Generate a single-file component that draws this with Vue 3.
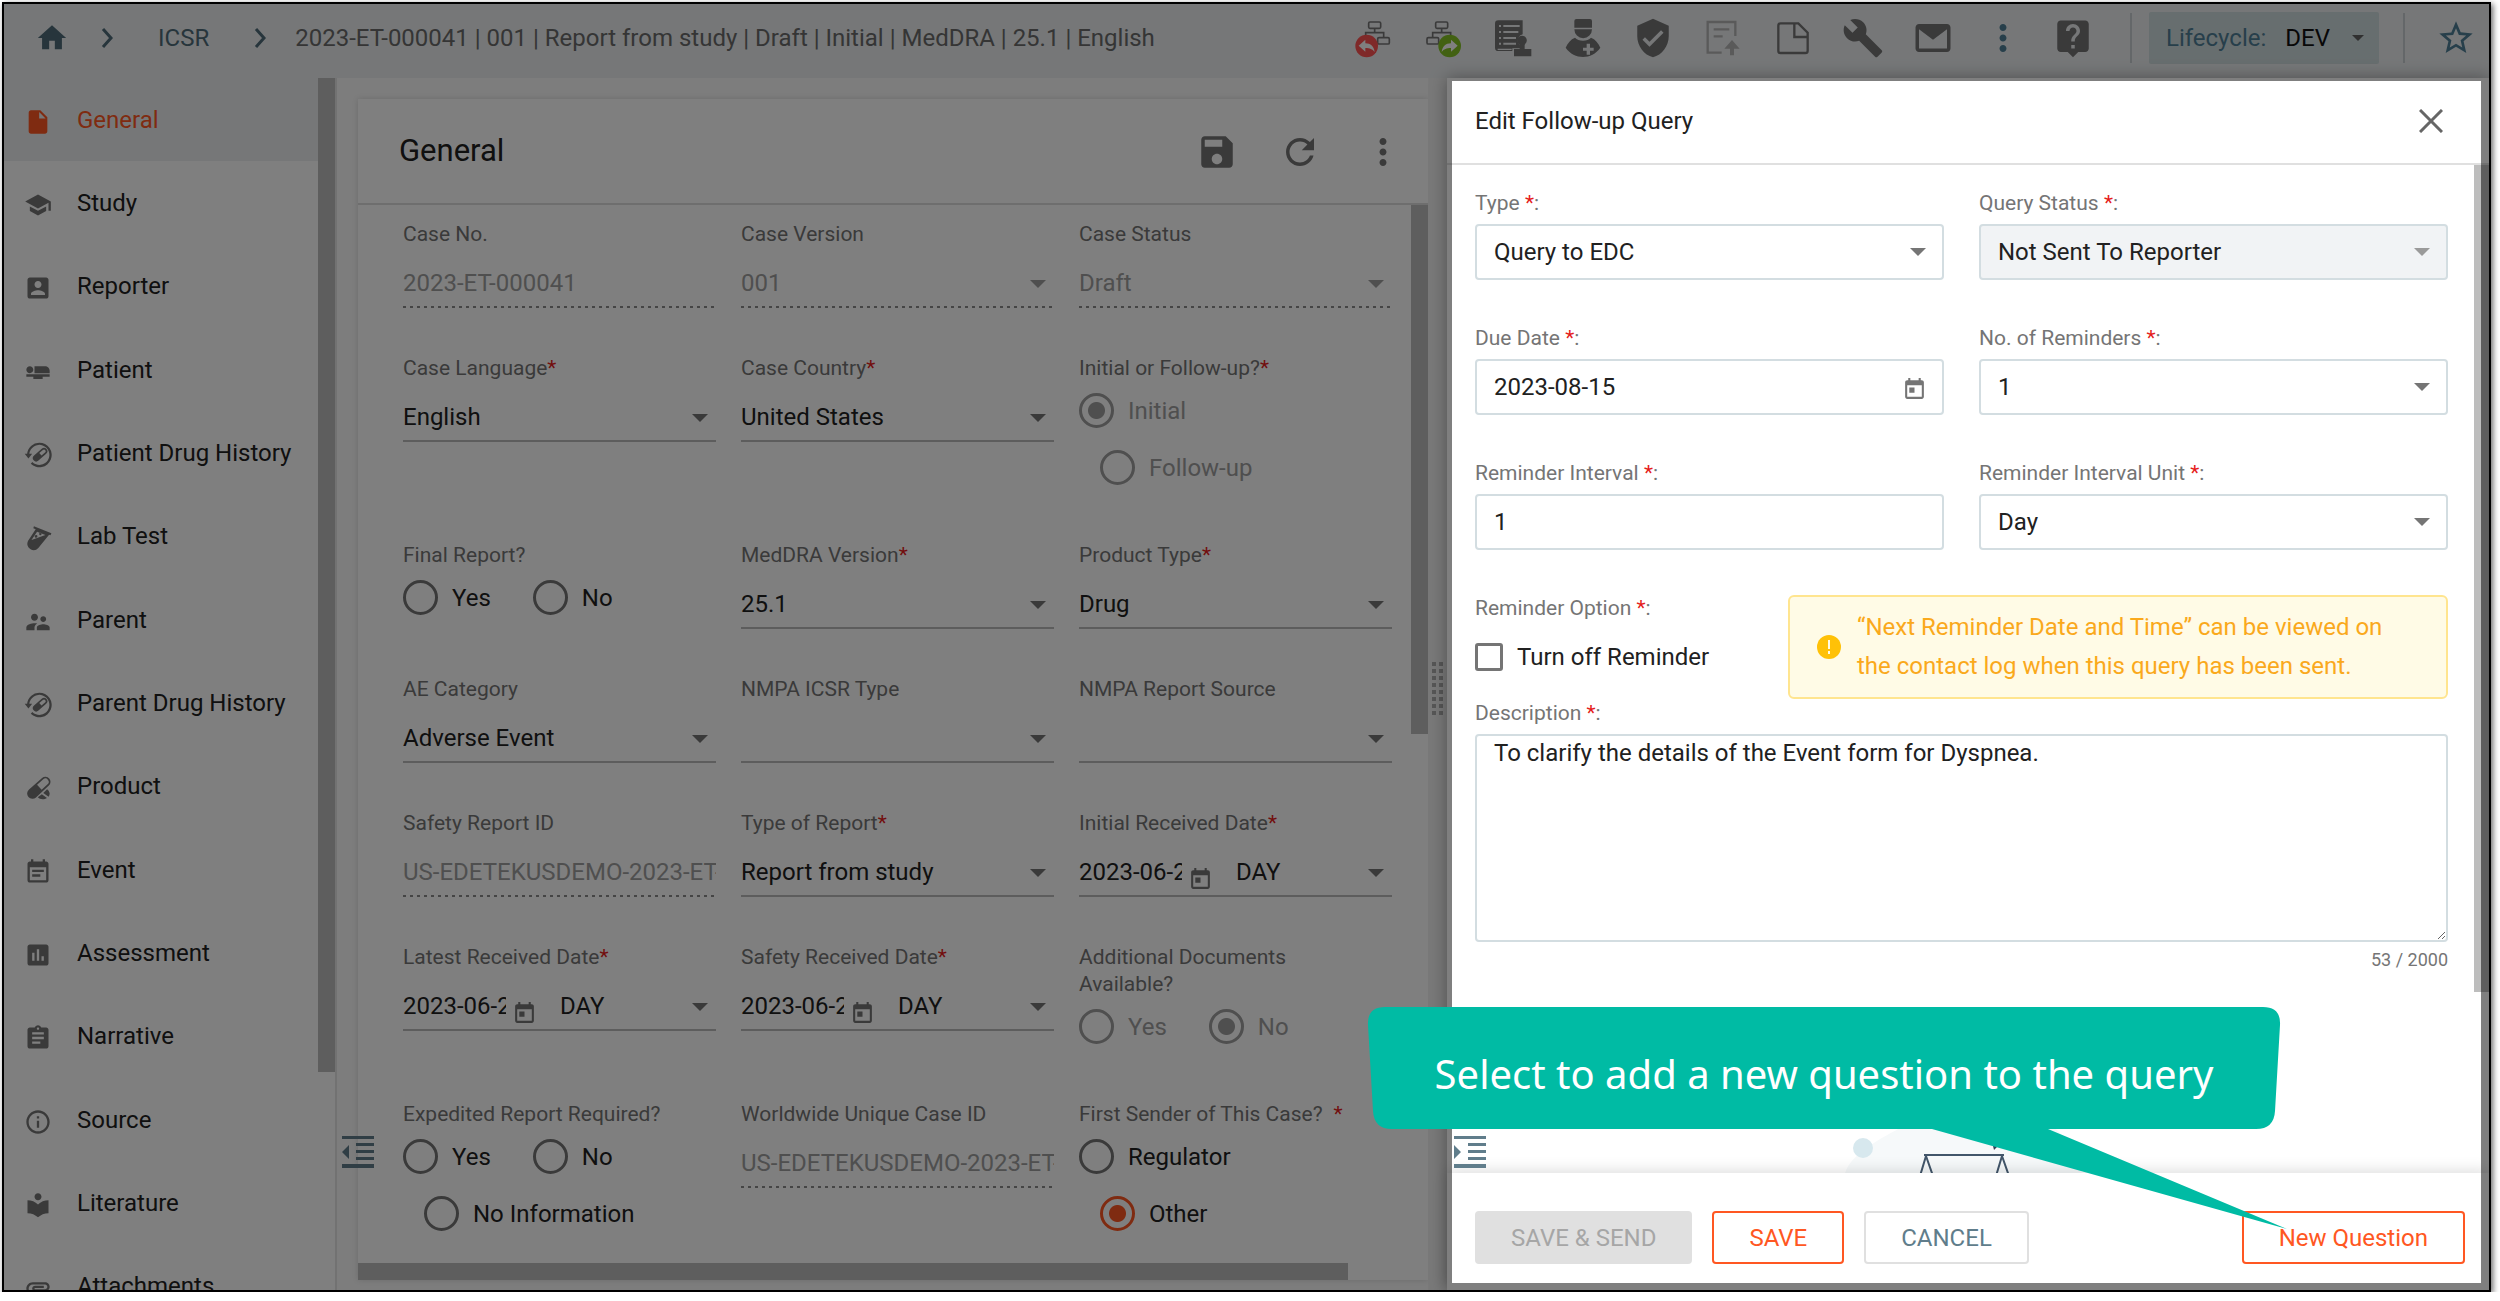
<script setup>
import { ref } from 'vue'

const menu = [
  { label: 'General', icon: 'file', active: true },
  { label: 'Study', icon: 'school' },
  { label: 'Reporter', icon: 'reporter' },
  { label: 'Patient', icon: 'patient' },
  { label: 'Patient Drug History', icon: 'history' },
  { label: 'Lab Test', icon: 'lab' },
  { label: 'Parent', icon: 'parent' },
  { label: 'Parent Drug History', icon: 'history' },
  { label: 'Product', icon: 'pill' },
  { label: 'Event', icon: 'event' },
  { label: 'Assessment', icon: 'assessment' },
  { label: 'Narrative', icon: 'narrative' },
  { label: 'Source', icon: 'info' },
  { label: 'Literature', icon: 'library' },
  { label: 'Attachments', icon: 'attachment' },
]

const paths = {
  file: 'M6 2c-1.1 0-1.99.9-1.99 2L4 20c0 1.1.89 2 1.99 2H18c1.1 0 2-.9 2-2V8l-6-6H6zm7 7V3.5L18.5 9H13z',
  school: 'M5 13.18v4L12 21l7-3.82v-4L12 17l-7-3.82zM12 3L1 9l11 6 9-4.91V17h2V9L12 3z',
  reporter: 'M3 5v14c0 1.1.89 2 2 2h14c1.1 0 2-.9 2-2V5c0-1.1-.9-2-2-2H5c-1.11 0-2 .9-2 2zm12 4c0 1.66-1.34 3-3 3s-3-1.34-3-3 1.34-3 3-3 3 1.34 3 3zm-9 8c0-2 4-3.1 6-3.1s6 1.1 6 3.1v1H6v-1z',
  patient: 'M22 11v2H9V7h9c2.21 0 4 1.79 4 4zM2 14v2h6v2h8v-2h6v-2H2zm5.14-1.9c1.16-1.19 1.14-3.08-.04-4.24-1.19-1.16-3.08-1.14-4.24.04-1.16 1.19-1.14 3.08.04 4.24 1.19 1.16 3.08 1.14 4.24-.04z',
  history: 'M13 1.5A10.5 10.5 0 0 0 2.7 11H.6l3.2 4L7 11H4.6a8.6 8.6 0 1 1 2.5 7l-1.3 1.4A10.5 10.5 0 1 0 13 1.5zM15.2 6.6l-6.6 5.8a2.9 2.9 0 0 0 3.8 4.4L19 11a2.9 2.9 0 0 0-3.8-4.4zm1 1.1a1.4 1.4 0 0 1 1.8 2.2L15 12.5l-1.9-2.2z',
  lab: 'M8.5 2l15 6-.8 1.6-1.2-.4L12.3 20.5A5.4 5.4 0 0 1 3.4 14.6L10 4.6l-2-1zM11.2 6.6L6.4 13.8l12-4.3zM10.3 9.4a1.2 1.2 0 1 1 .1 2.4 1.2 1.2 0 0 1-.1-2.4zM14 7.6a1 1 0 1 1 0 2 1 1 0 0 1 0-2z',
  parent: 'M16.5 12c1.38 0 2.49-1.12 2.49-2.5S17.88 7 16.5 7C15.12 7 14 8.12 14 9.5s1.12 2.5 2.5 2.5zM9 11c1.66 0 2.99-1.34 2.99-3S10.66 5 9 5C7.34 5 6 6.34 6 8s1.34 3 3 3zm7.5 3c-1.83 0-5.5.92-5.5 2.75V19h11v-2.25c0-1.83-3.67-2.75-5.5-2.75zM9 13c-2.33 0-7 1.17-7 3.5V19h7v-2.25c0-.85.33-2.34 2.37-3.47C10.5 13.1 9.66 13 9 13z',
  pill: 'M15.5 3.5L4.3 13.2a4.6 4.6 0 0 0 6 7L21.3 9.9a4.2 4.2 0 0 0-5.8-6.4zm1 1.1a2.7 2.7 0 0 1 3.7 4.2l-5.1 4.8-3.9-4.4zM19.8 13l-3.3 3.2 4.6 3.3a4.5 4.5 0 0 0-1.3-6.5zM15.3 17.3l-3.5 2.7c1.8 2 5.6 2.2 7.9.5z',
  event: 'M17 10H7v2h10v-2zm2-7h-1V1h-2v2H8V1H6v2H5c-1.11 0-1.99.9-1.99 2L3 19c0 1.1.89 2 2 2h14c1.1 0 2-.9 2-2V5c0-1.1-.9-2-2-2zm0 16H5V8h14v11zm-5-5H7v2h7v-2z',
  assessment: 'M19 3H5c-1.1 0-2 .9-2 2v14c0 1.1.9 2 2 2h14c1.1 0 2-.9 2-2V5c0-1.1-.9-2-2-2zM9 17H7v-7h2v7zm4 0h-2V7h2v10zm4 0h-2v-4h2v4z',
  narrative: 'M19 3h-4.18C14.4 1.84 13.3 1 12 1c-1.3 0-2.4.84-2.82 2H5c-1.1 0-2 .9-2 2v14c0 1.1.9 2 2 2h14c1.1 0 2-.9 2-2V5c0-1.1-.9-2-2-2zm-7 0c.55 0 1 .45 1 1s-.45 1-1 1-1-.45-1-1 .45-1 1-1zm2 14H7v-2h7v2zm3-4H7v-2h10v2zm0-4H7V7h10v2z',
  info: 'M11 17h2v-6h-2v6zm1-15C6.48 2 2 6.48 2 12s4.48 10 10 10 10-4.48 10-10S17.52 2 12 2zm0 18c-4.41 0-8-3.59-8-8s3.59-8 8-8 8 3.59 8 8-3.59 8-8 8zM11 9h2V7h-2v2z',
  library: 'M12 11.55C9.64 9.35 6.48 8 3 8v11c3.48 0 6.64 1.35 9 3.55 2.36-2.19 5.52-3.55 9-3.55V8c-3.48 0-6.64 1.35-9 3.55zM12 8c1.66 0 3-1.34 3-3s-1.34-3-3-3-3 1.34-3 3 1.34 3 3 3z',
  attachment: 'M2 12.5C2 9.46 4.46 7 7.5 7H18c2.21 0 4 1.79 4 4s-1.79 4-4 4H9.5C8.12 15 7 13.88 7 12.5S8.12 10 9.5 10H17v2H9.41c-.55 0-.55 1 0 1H18c1.1 0 2-.9 2-2s-.9-2-2-2H7.5C5.57 9 4 10.57 4 12.5S5.57 16 7.5 16H17v2H7.5C4.46 18 2 15.54 2 12.5z',
  save: 'M17 3H5c-1.11 0-2 .9-2 2v14c0 1.1.89 2 2 2h14c1.1 0 2-.9 2-2V7l-4-4zm-5 16c-1.66 0-3-1.34-3-3s1.34-3 3-3 3 1.34 3 3-1.34 3-3 3zm3-10H5V5h10v4z',
  refresh: 'M17.65 6.35C16.2 4.9 14.21 4 12 4c-4.42 0-7.99 3.58-7.99 8s3.57 8 7.99 8c3.73 0 6.84-2.55 7.73-6h-2.08c-.82 2.33-3.04 4-5.65 4-3.31 0-6-2.69-6-6s2.69-6 6-6c1.66 0 3.14.69 4.22 1.78L13 11h7V4l-2.35 2.35z',
  more: 'M12 8c1.1 0 2-.9 2-2s-.9-2-2-2-2 .9-2 2 .9 2 2 2zm0 2c-1.1 0-2 .9-2 2s.9 2 2 2 2-.9 2-2-.9-2-2-2zm0 6c-1.1 0-2 .9-2 2s.9 2 2 2 2-.9 2-2-.9-2-2-2z',
  today: 'M19 3h-1V1h-2v2H8V1H6v2H5c-1.11 0-1.99.9-1.99 2L3 19c0 1.1.89 2 2 2h14c1.1 0 2-.9 2-2V5c0-1.1-.9-2-2-2zm0 16H5V8h14v11zM7 10h5v5H7z',
  shield: 'M12 1L3 5v6c0 5.55 3.84 10.74 9 12 5.16-1.26 9-6.45 9-12V5l-9-4zm-2 16l-4-4 1.41-1.41L10 14.17l6.59-6.59L18 9l-8 8z',
  wrench: 'M22.7 19l-9.1-9.1c.9-2.3.4-5-1.5-6.9-2-2-5-2.4-7.4-1.3L9 6 6 9 1.6 4.7C.4 7.1.9 10.1 2.9 12.1c1.9 1.9 4.6 2.4 6.9 1.5l9.1 9.1c.4.4 1 .4 1.4 0l2.3-2.3c.5-.4.5-1.1.1-1.4z',
  mail: 'M20 4H4c-1.1 0-1.99.9-1.99 2L2 18c0 1.1.9 2 2 2h16c1.1 0 2-.9 2-2V6c0-1.1-.9-2-2-2zm0 14H4V7l8 6 8-6v11z',
  help: 'M19 2H5c-1.11 0-2 .9-2 2v14c0 1.1.89 2 2 2h4l3 3 3-3h4c1.1 0 2-.9 2-2V4c0-1.1-.9-2-2-2zm-6 16h-2v-2h2v2zm2.07-7.75l-.9.92C13.45 11.9 13 12.5 13 14h-2v-.5c0-1.1.45-2.1 1.17-2.83l1.24-1.26c.37-.36.59-.86.59-1.41 0-1.1-.9-2-2-2s-2 .9-2 2H8c0-2.21 1.79-4 4-4s4 1.79 4 4c0 .88-.36 1.68-.93 2.25z',
  star: 'M22 9.24l-7.19-.62L12 2 9.19 8.63 2 9.24l5.46 4.73L5.82 21 12 17.27 18.18 21l-1.63-7.03L22 9.24zM12 15.4l-3.76 2.27 1-4.28-3.32-2.88 4.38-.38L12 6.1l1.71 4.04 4.38.38-3.32 2.88 1 4.28L12 15.4z',
}

const tools = [
  { name: 'shield', title: 'Validate' },
  { name: 'export', title: 'Export' },
  { name: 'document', title: 'Document' },
  { name: 'wrench', title: 'Tools' },
  { name: 'mail', title: 'Correspondence' },
  { name: 'more', title: 'More', accent: true },
  { name: 'help', title: 'Help' },
]

const fields = [
  { id: 'case-no', label: 'Case No.', type: 'text', value: '2023-ET-000041', disabled: true },
  { id: 'case-version', label: 'Case Version', type: 'select', value: '001', disabled: true },
  { id: 'case-status', label: 'Case Status', type: 'select', value: 'Draft', disabled: true },
  { id: 'case-language', label: 'Case Language', required: true, type: 'select', value: 'English' },
  { id: 'case-country', label: 'Case Country', required: true, type: 'select', value: 'United States' },
  { id: 'initial', label: 'Initial or Follow-up?', required: true, type: 'radio', options: ['Initial', 'Follow-up'], value: 'Initial', disabled: true },
  { id: 'final-report', label: 'Final Report?', type: 'radio', options: ['Yes', 'No'], value: '' },
  { id: 'meddra', label: 'MedDRA Version', required: true, type: 'select', value: '25.1' },
  { id: 'product-type', label: 'Product Type', required: true, type: 'select', value: 'Drug' },
  { id: 'ae-category', label: 'AE Category', type: 'select', value: 'Adverse Event' },
  { id: 'nmpa-type', label: 'NMPA ICSR Type', type: 'select', value: '' },
  { id: 'nmpa-source', label: 'NMPA Report Source', type: 'select', value: '' },
  { id: 'safety-id', label: 'Safety Report ID', type: 'text', value: 'US-EDETEKUSDEMO-2023-ET-000041', disabled: true },
  { id: 'report-type', label: 'Type of Report', required: true, type: 'select', value: 'Report from study' },
  { id: 'initial-date', label: 'Initial Received Date', required: true, type: 'date', value: '2023-06-28' },
  { id: 'latest-date', label: 'Latest Received Date', required: true, type: 'date', value: '2023-06-28' },
  { id: 'safety-date', label: 'Safety Received Date', required: true, type: 'date', value: '2023-06-28' },
  { id: 'documents', label: 'Additional Documents Available?', type: 'radio', options: ['Yes', 'No'], value: 'No', disabled: true },
  { id: 'expedited', label: 'Expedited Report Required?', type: 'radio', options: ['Yes', 'No', 'No Information'], value: '' },
  { id: 'worldwide-id', label: 'Worldwide Unique Case ID', type: 'text', value: 'US-EDETEKUSDEMO-2023-ET-000041', disabled: true },
  { id: 'first-sender', label: 'First Sender of This Case?', required: true, spaced: true, type: 'radio', options: ['Regulator', 'Other'], value: 'Other' },
]

const queryFields = [
  { id: 'q-type', label: 'Type', type: 'select', value: 'Query to EDC' },
  { id: 'q-status', label: 'Query Status', type: 'select', value: 'Not Sent To Reporter', disabled: true },
  { id: 'q-due', label: 'Due Date', type: 'date', value: '2023-08-15' },
  { id: 'q-reminders', label: 'No. of Reminders', type: 'select', value: '1' },
  { id: 'q-interval', label: 'Reminder Interval', type: 'text', value: '1' },
  { id: 'q-unit', label: 'Reminder Interval Unit', type: 'select', value: 'Day' },
]

const description = ref('To clarify the details of the Event form for Dyspnea.')
</script>

<template>
  <div class="app">
    <header class="topbar">
      <nav class="crumbs" aria-label="Breadcrumb">
        <a href="#" class="home" aria-label="Home">
          <svg viewBox="0 0 24 24"><path d="M10 20v-6h4v6h5v-8h3L12 3 2 12h3v8z" /></svg>
        </a>
        <svg class="chevron" viewBox="0 0 14 20"><path d="M2 1l8 9-8 9" /></svg>
        <a href="#" class="crumb">ICSR</a>
        <svg class="chevron" viewBox="0 0 14 20"><path d="M2 1l8 9-8 9" /></svg>
        <span class="case-title">2023-ET-000041 | 001 | Report from study | Draft | Initial | MedDRA | 25.1 | English</span>
      </nav>
      <div class="tools">
        <button type="button" title="Previous">
          <svg viewBox="40 51 126 126">
            <g class="line">
              <rect x="90" y="66" width="36" height="19" rx="4" />
              <path d="M108 85v13M81 106v-8h54v14" />
              <rect x="117" y="113" width="35" height="19" rx="4" />
            </g>
            <circle cx="84" cy="138" r="34" fill="#ff5252" />
            <path d="M60 137l20-18v11c16 0 26 9 28 26-7-9-14-12-28-12v11z" fill="#fff" />
          </svg>
        </button>
        <button type="button" title="Next">
          <svg viewBox="257 51 126 126">
            <g class="line">
              <rect x="298" y="66" width="36" height="19" rx="4" />
              <path d="M316 85v13M289 112v-14h54v8" />
              <rect x="272" y="113" width="35" height="19" rx="4" />
            </g>
            <circle cx="340" cy="138" r="34" fill="#84c225" />
            <path d="M364 137l-20-18v11c-16 0-26 9-28 26 7-9 14-12 28-12v11z" fill="#fff" />
          </svg>
        </button>
        <button type="button" title="Sign off">
          <svg viewBox="459 53 126 126">
            <path fill-rule="evenodd" d="M478 63h73v42a18 18 0 0 0-12 27l4 6v9h-23v8h-42a10 10 0 0 1-10-10V73a10 10 0 0 1 10-10zm2 14v6h6v-6zm13 0v6h49v-6zm-13 18v6h6v-6zm13 0v6h45v-6zm-13 18v6h6v-6zm13 0v6h38v-6zm-13 17v6h6v-6zm13 0v6h38v-6zm-17 18v4h42v-4z" />
            <path d="M549 109a14 14 0 0 1 10 24l-2 4v12h20v22h-52v-22h17v-12l-3-4a14 14 0 0 1 10-24z" />
          </svg>
        </button>
        <button type="button" title="Reporter">
          <svg viewBox="670 51 126 126">
            <path d="M713 57h41q6 0 6 6v20h-53V63q0-6 6-6zM707 88h53a26.5 26.5 0 0 1-53 0z" />
            <path fill-rule="evenodd" d="M681 143c6-14 15-25 28-30 10 12 38 12 48 0 13 5 22 16 28 30-26 37-78 37-104 0zm63-12v12h-11v9h11v12h10v-12h11v-9h-11v-12z" />
          </svg>
        </button>
        <button v-for="t in tools" :key="t.name" type="button" :title="t.title" :class="{ accent: t.accent }">
          <svg v-if="t.name === 'export'" class="muted" viewBox="1089 51 126 126">
            <path class="thick" d="M1148 158h-42V66h83v42" />
            <path class="thick" d="M1124 88h47M1124 109h27" />
            <path d="M1179 120l23 26h-17v20h-12v-20h-17z" />
          </svg>
          <svg v-else-if="t.name === 'document'" viewBox="1296 51 126 126">
            <path class="thick" d="M1322 70h53l28 28v54q0 7-7 7h-74q-7 0-7-7V77q0-7 7-7z" />
            <path class="thick" d="M1363 70v41h40" />
          </svg>
          <svg v-else viewBox="0 0 24 24"><path fill-rule="evenodd" :d="paths[t.name]" /></svg>
        </button>
      </div>
      <div class="lifecycle-area">
        <div class="lifecycle">
          <label for="lifecycle">Lifecycle:</label>
          <select id="lifecycle"><option>DEV</option></select>
          <svg class="small-caret" viewBox="0 0 12 6"><path d="M0 0h12l-6 6z" /></svg>
        </div>
      </div>
      <button type="button" class="star" title="Favourite"><svg viewBox="0 0 24 24"><path :d="paths.star" /></svg></button>
    </header>

    <div class="body">
      <aside class="sidebar">
        <ul class="menu">
          <li v-for="m in menu" :key="m.label">
            <a href="#" :class="{ active: m.active }">
              <svg viewBox="0 0 24 24"><path fill-rule="evenodd" :d="paths[m.icon]" /></svg>
              <span>{{ m.label }}</span>
            </a>
          </li>
        </ul>
        <div class="side-bar"></div>
      </aside>

      <main class="main">
        <section class="card">
          <div class="card-head">
            <h1>General</h1>
            <div class="card-actions">
              <button v-for="n in ['save', 'refresh', 'more']" :key="n" type="button" :title="n">
                <svg viewBox="0 0 24 24"><path :d="paths[n]" /></svg>
              </button>
            </div>
          </div>
          <div class="card-body">
            <form class="case-form">
              <div v-for="f in fields" :key="f.id" class="field" :class="{ disabled: f.disabled }">
                <component :is="f.type === 'radio' ? 'div' : 'label'" class="label" :for="f.type === 'radio' ? null : f.id">{{ f.label }}<b v-if="f.required" :class="{ spaced: f.spaced }">*</b></component>
                <div v-if="f.type === 'radio'" class="radios" role="radiogroup" :aria-label="f.label">
                  <label v-for="o in f.options" :key="o">
                    <input type="radio" :name="f.id" :value="o" :checked="o === f.value" :disabled="f.disabled" />
                    <span>{{ o }}</span>
                  </label>
                </div>
                <div v-else-if="f.type === 'date'" class="control">
                  <input :id="f.id" class="date" type="text" :value="f.value" />
                  <svg class="today" viewBox="0 0 24 24"><path :d="paths.today" /></svg>
                  <select aria-label="Precision"><option>DAY</option></select>
                  <svg class="caret" viewBox="0 0 16 8"><path d="M0 0h16l-8 8z" /></svg>
                </div>
                <div v-else class="control">
                  <input v-if="f.type === 'text'" :id="f.id" type="text" :value="f.value" :disabled="f.disabled" />
                  <template v-else>
                    <select :id="f.id" :disabled="f.disabled"><option>{{ f.value }}</option></select>
                    <svg class="caret" viewBox="0 0 16 8"><path d="M0 0h16l-8 8z" /></svg>
                  </template>
                </div>
              </div>
            </form>
            <div class="v-track"><div class="v-thumb"></div></div>
            <div class="h-track"><div class="h-thumb"></div></div>
          </div>
        </section>
        <div class="splitter"><div class="grip"></div></div>
        <button type="button" class="toggle" title="Collapse menu">
          <svg viewBox="0 0 32 32"><path d="M0 0h32v3H0zM14 7h18v3H14zM14 14h18v3H14zM14 21h18v3H14zM0 28h32v4H0zM7 9v14l-7-7z" /></svg>
        </button>
      </main>

      <section class="drawer" aria-label="Edit Follow-up Query">
        <div class="drawer-head">
          <h2>Edit Follow-up Query</h2>
          <button type="button" class="close" title="Close"><svg viewBox="0 0 24 24"><path d="M1 1l22 22M23 1L1 23" /></svg></button>
        </div>
        <div class="drawer-body">
          <div class="query-grid">
            <div v-for="q in queryFields" :key="q.id" class="q-field">
              <label :for="q.id" class="q-label">{{ q.label }} <b>*</b>:</label>
              <div class="q-control" :class="{ off: q.disabled }">
                <template v-if="q.type === 'select'">
                  <select :id="q.id" :disabled="q.disabled"><option>{{ q.value }}</option></select>
                  <svg class="caret" viewBox="0 0 16 8"><path d="M0 0h16l-8 8z" /></svg>
                </template>
                <template v-else>
                  <input :id="q.id" type="text" :value="q.value" />
                  <svg v-if="q.type === 'date'" class="today" viewBox="0 0 24 24"><path :d="paths.today" /></svg>
                </template>
              </div>
            </div>
          </div>
          <div class="option-row">
            <div class="option">
              <div class="q-label">Reminder Option <b>*</b>:</div>
              <label class="check"><input type="checkbox" /><span>Turn off Reminder</span></label>
            </div>
            <div class="notice">
              <svg viewBox="0 0 24 24"><circle cx="12" cy="12" r="12" fill="#ffc107" /><path d="M11 5h2v9h-2zM11 16h2v3h-2z" fill="#fffbe6" /></svg>
              <p>“Next Reminder Date and Time” can be viewed on the contact log when this query has been sent.</p>
            </div>
          </div>
          <label for="q-desc" class="q-label">Description <b>*</b>:</label>
          <textarea id="q-desc" v-model="description"></textarea>
          <div class="counter">{{ description.length }} / 2000</div>
          <svg class="art" viewBox="0 0 240 160">
            <path d="M2 100C2 80 28 64 58 48C100 20 180 20 215 50C236 70 240 84 240 100V160H2z" fill="#f6f9fa" />
            <circle cx="21" cy="68" r="10" fill="#d7e8ee" />
            <path d="M82 75h80M84 76l-12 40M84 76l14 40M160 76l-12 40M160 76l14 40" fill="none" stroke="#42566a" stroke-width="2" />
            <path d="M150 62l8 2-6 6z" fill="#2f4256" />
          </svg>
          <div class="drawer-thumb"></div>
        </div>
        <div class="drawer-foot">
          <button type="button" class="btn" disabled>SAVE &amp; SEND</button>
          <button type="button" class="btn primary">SAVE</button>
          <button type="button" class="btn plain">CANCEL</button>
          <button type="button" class="btn primary last">New Question</button>
        </div>
        <button type="button" class="toggle" title="Expand panel">
          <svg viewBox="0 0 32 32"><path d="M0 0h32v3H0zM14 7h18v3H14zM14 14h18v3H14zM14 21h18v3H14zM0 28h32v4H0zM0 9v14l7-7z" /></svg>
        </button>
        <div class="spotlight"></div>
        <div class="callout">
          <svg viewBox="0 0 922 224"><path d="M18 1H896Q914 1 913 19L908 105Q907 123 889 123H681L920 223L565 123H25Q7 123 6 105L1 19Q0 1 18 1z" /></svg>
          <p>Select to add a new question to the query</p>
        </div>
      </section>
    </div>
  </div>
</template>

<style>
body {
  background: #fff;
}
</style>

<style scoped>
* {
  box-sizing: border-box;
}

.app {
  display: flex;
  flex-direction: column;
  position: relative;
  height: calc(100vh - 11px);
  margin: 2px 9px 0 2px;
  border: 2px solid #000;
  box-shadow: 2px 2px 6px rgba(0, 0, 0, 0.6);
  overflow: hidden;
  background: #fff;
  color: #212121;
  font: 24px/28px Roboto, "Liberation Sans", sans-serif;
}

button,
input,
select,
textarea {
  margin: 0;
  padding: 0;
  border: 0;
  outline: 0;
  background: none;
  color: inherit;
  font: inherit;
}

select,
input {
  appearance: none;
  min-width: 0;
  border-radius: 0;
  opacity: 1;
}

h1,
h2,
p,
ul {
  margin: 0;
  padding: 0;
  font-weight: 400;
  list-style: none;
}

a {
  color: inherit;
  text-decoration: none;
}

svg {
  display: block;
  flex: none;
  fill: currentColor;
}

/* top bar */
.topbar {
  display: flex;
  align-items: center;
  flex: 0 0 74px;
  background: #eceff1;
  padding-bottom: 7px;
}

.crumbs {
  display: flex;
  align-items: center;
  flex: 1;
  min-width: 0;
  padding-left: 31px;
  color: #4f6b78;
  white-space: nowrap;
}

.home svg {
  width: 34px;
  height: 34px;
}

.chevron {
  width: 14px;
  height: 20px;
  margin-left: 32px;
  fill: none;
  stroke: currentColor;
  stroke-width: 3;
}

.crumb {
  margin-left: 43px;
}

.crumb + .chevron {
  margin-left: 45px;
}

.case-title {
  margin-left: 27px;
  color: #6b6b6b;
}

.tools {
  display: flex;
  color: #757575;
}

.tools button {
  display: grid;
  place-items: center;
  width: 70px;
}

.tools .accent {
  color: #4f7f96;
}

.tools svg {
  width: 42px;
  height: 42px;
}

.tools .line,
.tools .thick {
  fill: none;
  stroke: currentColor;
  stroke-width: 5;
}

.tools .thick {
  stroke-width: 7;
}

.tools .muted {
  color: #b4b4b4;
}

.lifecycle-area {
  display: flex;
  align-items: center;
  height: 50px;
  margin-left: 22px;
  padding: 0 24px 0 17px;
  border: solid #c9cfd2;
  border-width: 0 2px;
}

.lifecycle {
  display: flex;
  align-items: center;
  width: 230px;
  height: 52px;
  padding: 0 15px 0 17px;
  border-radius: 2px;
  background: #cfdcde;
  color: #4f7f96;
}

.lifecycle select {
  flex: 1;
  margin-left: 19px;
  color: #111;
}

.small-caret {
  width: 12px;
  height: 6px;
  color: #616161;
}

.star {
  width: 40px;
  margin: 0 13px 0 31px;
  color: #4f7f96;
}

/* side menu */
.body {
  display: flex;
  flex: 1;
  min-height: 0;
}

.sidebar {
  display: flex;
  flex: 0 0 333px;
  overflow: hidden;
  border-right: 2px solid #e4e4e4;
}

.menu {
  display: grid;
  grid-auto-rows: 1fr;
  flex: 1;
  height: 1250px;
}

.menu a {
  display: flex;
  align-items: center;
  gap: 25px;
  height: 100%;
  padding-left: 20px;
}

.menu svg {
  width: 28px;
  height: 28px;
  margin-top: 4px;
  color: #757575;
}

.menu .active {
  background: #eceff1;
}

.menu .active,
.menu .active svg {
  color: #ff5722;
}

.side-bar {
  width: 17px;
  height: 82%;
  background: #bdbdbd;
}

/* case form */
.main {
  display: flex;
  position: relative;
  flex: 1;
  min-width: 0;
  background: #fafafa;
}

.card {
  display: flex;
  flex-direction: column;
  flex: 1;
  min-width: 0;
  margin: 21px 0 10px 21px;
  background: #fff;
  box-shadow: 0 0 6px rgba(0, 0, 0, 0.14);
}

.card-head {
  display: flex;
  align-items: center;
  justify-content: space-between;
  flex: 0 0 106px;
  padding: 0 24px 0 41px;
  border-bottom: 2px solid #dcdcdc;
}

.card-head h1 {
  font-size: 31px;
}

.card-actions {
  display: flex;
  gap: 41px;
  padding-top: 2px;
  color: #757575;
}

.card-actions svg {
  width: 42px;
  height: 42px;
}

.card-body {
  display: grid;
  grid-template: minmax(0, 1fr) 17px / minmax(0, 1fr) 17px;
  flex: 1;
  min-height: 0;
}

.case-form {
  display: grid;
  grid-template-columns: repeat(3, minmax(0, 1fr));
  grid-auto-rows: max-content;
  align-content: start;
  column-gap: 25px;
  padding: 0 19px 0 45px;
  overflow: hidden;
}

.v-thumb {
  height: 50%;
  background: #bdbdbd;
}

.h-thumb {
  width: 94%;
  height: 17px;
  background: #bdbdbd;
}

.field {
  min-height: 134px;
  padding: 16px 0 30px;
}

.label {
  display: block;
  padding-right: 32px;
  color: #757575;
  font-size: 21px;
  line-height: 27px;
}

.label b {
  color: #e51c1c;
}

.label .spaced {
  margin-left: 11px;
}

b {
  font-weight: 400;
}

.control {
  display: flex;
  align-items: center;
  position: relative;
  height: 46px;
  margin-top: 14px;
  border-bottom: 2px solid #bababa;
}

.control > input,
.control > select {
  flex: 1;
  height: 42px;
  margin-bottom: 2px;
}

.control > .date {
  flex: 0 0 103px;
}

.control .today {
  margin: 12px 23px 0 6px;
}

.today {
  width: 25px;
  height: 25px;
  color: #757575;
}

.caret {
  position: absolute;
  right: 8px;
  width: 16px;
  height: 8px;
  color: #757575;
  pointer-events: none;
}

.disabled .control {
  border-bottom: 0;
  padding-bottom: 2px;
  background: repeating-linear-gradient(90deg, #8a8a8a 0 3px, transparent 3px 7px) bottom / 100% 2px no-repeat;
}

.disabled input,
.disabled select,
.disabled .radios {
  color: #9e9e9e;
}

.disabled .caret {
  color: #9e9e9e;
}

.radios {
  display: flex;
  flex-wrap: wrap;
}

.radios label {
  display: flex;
  align-items: center;
  gap: 14px;
  height: 57px;
  margin: 0 21px;
}

.radios label:first-child {
  margin-left: 0;
}

.radios input {
  width: 35px;
  height: 35px;
  border: 3px solid #757575;
  border-radius: 50%;
}

.radios input:checked {
  border-color: #ff5722;
  background: radial-gradient(circle, #ff5722 8px, transparent 9px);
}

.radios input:disabled {
  border-color: #9e9e9e;
}

.radios input:checked:disabled {
  background: radial-gradient(circle, #9e9e9e 8px, transparent 9px);
}

.splitter {
  display: grid;
  place-items: center;
  flex: 0 0 19px;
  background: #f2f2f2;
}

.grip {
  width: 11px;
  height: 53px;
  margin-top: 9px;
  background: repeating-linear-gradient(transparent 0 4px, #f2f2f2 4px 7px), repeating-linear-gradient(90deg, #adadad 0 4px, transparent 4px 7px);
}

.toggle {
  position: absolute;
  left: 5px;
  bottom: 122px;
  width: 32px;
  height: 32px;
  color: #607d8b;
}

/* query drawer */
.drawer {
  display: flex;
  flex-direction: column;
  position: relative;
  flex: 0 0 1042px;
  background: #fff;
  box-shadow: 0 0 16px rgba(0, 0, 0, 0.35);
}

.drawer .toggle {
  left: 7px;
}

.drawer-head {
  display: flex;
  align-items: center;
  justify-content: space-between;
  flex: 0 0 87px;
  padding: 0 46px 0 28px;
  border-bottom: 2px solid #e0e0e0;
}

.drawer-head h2 {
  font-size: 24px;
}

.close svg {
  width: 24px;
  height: 24px;
  fill: none;
  stroke: #666;
  stroke-width: 3;
}

.drawer-body {
  flex: 1;
  position: relative;
  min-height: 0;
  padding: 25px 41px 0 28px;
  overflow: hidden;
}

.drawer-thumb {
  position: absolute;
  top: 0;
  right: 0;
  width: 15px;
  height: 82%;
  background: #bdbdbd;
}

.query-grid {
  display: grid;
  grid-template-columns: 1fr 1fr;
  column-gap: 35px;
}

.q-field {
  height: 135px;
}

.q-label {
  display: block;
  margin-bottom: 8px;
  color: #757575;
  font-size: 21px;
  line-height: 26px;
}

.q-label b {
  color: #e51c1c;
}

.q-control {
  display: flex;
  align-items: center;
  position: relative;
  height: 56px;
  padding-left: 17px;
  border: 2px solid #d3dde1;
  border-radius: 4px;
}

.q-control input,
.q-control select {
  flex: 1;
  height: 52px;
}

.q-control .caret {
  right: 16px;
}

.q-control .today {
  margin: 4px 15px 0 0;
}

.off {
  background: #f1f3f5;
}

.off .caret {
  color: #9a9a9a;
}

.off select {
  color: #212121;
}

.option-row {
  display: flex;
  justify-content: space-between;
  margin-bottom: 1px;
}

.check {
  display: flex;
  align-items: center;
  gap: 14px;
  margin-top: 22px;
}

.check input {
  width: 28px;
  height: 28px;
  border: 3px solid #757575;
  border-radius: 3px;
}

.notice {
  display: flex;
  align-items: center;
  gap: 16px;
  width: 660px;
  height: 104px;
  padding: 0 27px;
  border: 2px solid #ffe58f;
  border-radius: 6px;
  background: #fffbe6;
  color: #faa91c;
  line-height: 39px;
}

.notice svg {
  width: 24px;
  height: 24px;
}

textarea {
  display: block;
  width: 100%;
  height: 208px;
  padding: 3px 17px;
  border: 2px solid #d3dde1;
  border-radius: 4px;
  resize: vertical;
}

.counter {
  margin-top: 6px;
  color: #757575;
  font-size: 18px;
  line-height: 24px;
  text-align: right;
}

.art {
  width: 240px;
  height: 160px;
  margin: 108px auto 0;
}

.drawer-foot {
  display: flex;
  align-items: flex-start;
  gap: 20px;
  position: relative;
  flex: 0 0 117px;
  padding: 38px 24px 0 28px;
  background: #fff;
  box-shadow: 0 -2px 14px rgba(0, 0, 0, 0.14);
}

.btn {
  height: 53px;
  padding: 0 35px;
  border: 2px solid #e0e0e0;
  border-radius: 4px;
  white-space: nowrap;
}

.btn:disabled {
  padding: 0 34px;
  background: #e0e0e0;
  color: #a6a6a6;
}

.primary {
  border-color: #ff5722;
  color: #ff5722;
}

.plain {
  color: #607d8b;
}

.last {
  margin-left: auto;
}

/* dims everything outside the highlighted part of the drawer */
.spotlight {
  position: absolute;
  inset: 3px 8px 7px 5px;
  box-shadow: 0 0 0 4000px rgba(0, 0, 0, 0.5);
  pointer-events: none;
}

.callout {
  position: absolute;
  right: 200px;
  bottom: 60px;
  width: 922px;
  height: 224px;
  color: #fff;
  pointer-events: none;
}

.callout svg {
  width: 922px;
  height: 224px;
  fill: #00bba4;
}

.callout p {
  position: absolute;
  top: 0;
  left: 0;
  width: 914px;
  font: 40px/136px "Noto Sans", "Open Sans", sans-serif;
  text-align: center;
}
</style>
